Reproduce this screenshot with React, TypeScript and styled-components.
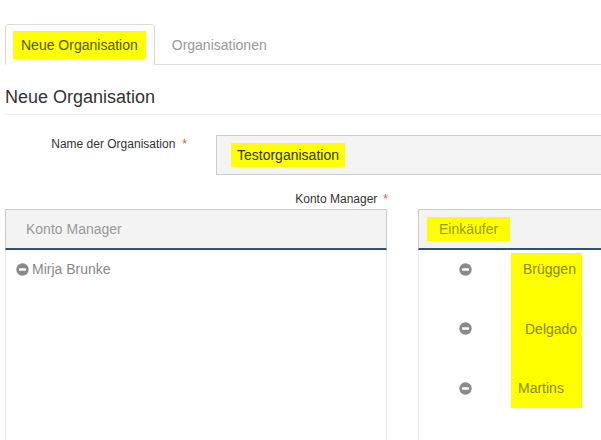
import React from 'react';
import styled, { createGlobalStyle } from 'styled-components';

const GlobalStyle = createGlobalStyle`
  html, body {
    margin: 0;
    padding: 0;
    background: #fff;
  }
  body {
    font-family: 'Liberation Sans', Arial, sans-serif;
    color: #333;
  }
`;

/* ------------------------------- Icons ------------------------------- */
const MinusIcon = () => (
  <svg width="13" height="13" viewBox="0 0 13 13" aria-hidden="true">
    <circle cx="6.5" cy="6.5" r="6.2" fill="#8a8a8a" />
    <rect x="3" y="5.3" width="7" height="2.4" rx="0.4" fill="#fff" />
  </svg>
);

/* ------------------------------ Layout ------------------------------- */
const Page = styled.div`
  width: 601px;
  height: 440px;
  overflow: hidden;
  padding-left: 5px;
  box-sizing: border-box;
`;

const TabBar = styled.div`
  display: flex;
  margin-top: 24px;
  border-bottom: 1px solid #ddd;
`;

const Tab = styled.div<{ $active?: boolean }>`
  margin-bottom: -1px;
  border: 1px solid ${(p) => (p.$active ? '#ddd' : 'transparent')};
  border-bottom-color: ${(p) => (p.$active ? '#fff' : 'transparent')};
  border-radius: 4px 4px 0 0;
  background: ${(p) => (p.$active ? '#fff' : 'transparent')};
  padding: ${(p) => (p.$active ? '6px 8px 5px 7px' : '6px 8px 5px 6px')};
  margin-left: ${(p) => (p.$active ? '0' : '2px')};
  font-size: 14px;
`;

const Mark = styled.span<{ $on?: boolean; $ink: string }>`
  display: inline-block;
  padding: 0 8px;
  line-height: 28px;
  background: ${(p) => (p.$on ? '#ffff00' : 'transparent')};
  color: ${(p) => p.$ink};
`;

const Heading = styled.h2`
  margin: 22px 0 0;
  padding-bottom: 7px;
  font-size: 18px;
  line-height: 20px;
  font-weight: normal;
  color: #333;
  border-bottom: 1px solid #eee;
`;

const FormRow = styled.div`
  display: flex;
  margin-top: 20px;
`;

const FieldLabel = styled.div`
  width: 182px;
  flex-shrink: 0;
  white-space: nowrap;
  display: flex;
  justify-content: flex-end;
  padding-top: 2px;
  font-size: 12px;
  line-height: 14px;
  color: #333;
`;

const Required = styled.span`
  color: #d9534f;
  margin-left: 7px;
`;

const Input = styled.div`
  margin-left: 29px;
  flex-shrink: 0;
  width: 500px;
  height: 40px;
  box-sizing: border-box;
  border: 1px solid #ccc;
  background: #f4f4f4;
  display: flex;
  align-items: center;
  padding-left: 14px;
`;

const InputValue = styled.span`
  background: #ffff00;
  color: #333300;
  font-size: 14px;
  line-height: 24px;
  padding: 0 6px;
`;

const ManagerLabel = styled.div`
  width: 383px;
  display: flex;
  justify-content: flex-end;
  margin-top: 17px;
  font-size: 12px;
  line-height: 14px;
  color: #333;

  ${Required} {
    margin-left: 6px;
  }
`;

const Panels = styled.div`
  display: flex;
  gap: 31px;
  margin-top: 3px;
`;

const Panel = styled.div`
  width: 382px;
  flex-shrink: 0;
  display: flex;
  flex-direction: column;
`;

const PanelHeader = styled.div`
  height: 38px;
  display: flex;
  align-items: center;
  padding: 0 8px;
  background: #f3f3f3;
  border: 1px solid #ccc;
  border-bottom: 2px solid #34506c;
`;

const HeaderText = styled.span<{ $on?: boolean }>`
  padding: 0 12px;
  line-height: 24px;
  font-size: 14px;
  background: ${(p) => (p.$on ? '#ffff00' : 'transparent')};
  color: ${(p) => (p.$on ? '#999900' : '#999')};
`;

const PanelBody = styled.div`
  height: 200px;
  border-left: 1px solid #ebebeb;
  border-right: 1px solid #ebebeb;
`;

const ManagerItem = styled.div`
  display: flex;
  align-items: center;
  gap: 3px;
  padding: 9px 0 0 10px;
  font-size: 14px;
  line-height: 20px;
  color: #888;
`;

const BuyerList = styled.div`
  display: flex;
  padding-top: 3px;
`;

const IconColumn = styled.div`
  width: 92px;
  display: flex;
  flex-direction: column;
  align-items: center;
  gap: 27.5px;
`;

const NameColumn = styled.div`
  width: 71px;
  background: #ffff00;
  display: flex;
  flex-direction: column;
  gap: 27.5px;
  padding-bottom: 4px;
`;

const Cell = styled.div`
  height: 32px;
  display: flex;
  align-items: center;
`;

const NameCell = styled(Cell)<{ $indent: number }>`
  padding-left: ${(p) => p.$indent}px;
  font-size: 14px;
  color: #888800;
`;

const buyers = [
  { name: 'Brüggen', indent: 12 },
  { name: 'Delgado', indent: 14 },
  { name: 'Martins', indent: 7 },
];

const App = () => {
  return (
    <Page>
      <GlobalStyle />
      <TabBar>
        <Tab $active>
          <Mark $on $ink="#555500">Neue Organisation</Mark>
        </Tab>
        <Tab>
          <Mark $ink="#999">Organisationen</Mark>
        </Tab>
      </TabBar>

      <Heading>Neue Organisation</Heading>

      <FormRow>
        <FieldLabel>
          Name der Organisation<Required>*</Required>
        </FieldLabel>
        <Input>
          <InputValue>Testorganisation</InputValue>
        </Input>
      </FormRow>

      <ManagerLabel>
        Konto Manager<Required>*</Required>
      </ManagerLabel>

      <Panels>
        <Panel>
          <PanelHeader>
            <HeaderText>Konto Manager</HeaderText>
          </PanelHeader>
          <PanelBody>
            <ManagerItem>
              <MinusIcon />
              Mirja Brunke
            </ManagerItem>
          </PanelBody>
        </Panel>

        <Panel>
          <PanelHeader>
            <HeaderText $on>Einkäufer</HeaderText>
          </PanelHeader>
          <PanelBody>
            <BuyerList>
              <IconColumn>
                {buyers.map((b) => (
                  <Cell key={b.name}>
                    <MinusIcon />
                  </Cell>
                ))}
              </IconColumn>
              <NameColumn>
                {buyers.map((b) => (
                  <NameCell key={b.name} $indent={b.indent}>
                    {b.name}
                  </NameCell>
                ))}
              </NameColumn>
            </BuyerList>
          </PanelBody>
        </Panel>
      </Panels>
    </Page>
  );
};

export default App;
